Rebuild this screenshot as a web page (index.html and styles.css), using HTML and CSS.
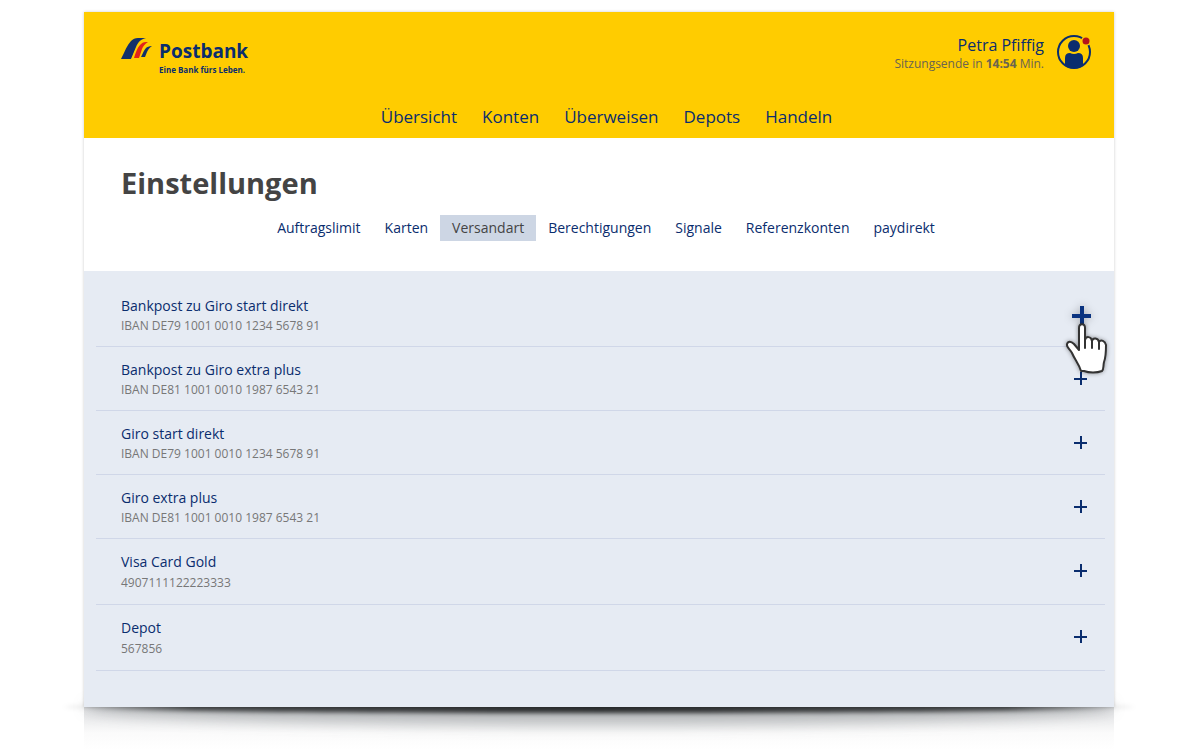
FILE: index.html
```html
<!DOCTYPE html>
<html lang="de">
<head>
<meta charset="utf-8">
<meta name="viewport" content="width=device-width, initial-scale=1">
<title>Postbank – Einstellungen</title>
<link rel="stylesheet" href="styles.css">
</head>
<body>
<div class="stage">
<div class="card">
  <header class="header">
    <div class="header-top">
      <a class="brand" href="#">
        <svg class="brand-mark" viewBox="0 0 31 22" aria-hidden="true">
          <path fill="#12306b" d="M0 21C4 13 6 7 10 3c2-2 4-3 7-3h8c-5 1-8 4-10 9l-5 12z"/>
          <path fill="#fc0" d="M10 22c3-6 4-11 7-15 2-3 4-4 7-4h3l-6 18z"/>
          <path fill="#e2231a" d="M13 20c2-6 3-10 6-13 2-2 3-3 6-3h2c-3 2-5 4-6 7l-3 9z"/>
          <path fill="#12306b" d="M20 19c2-4 3-7 5-9 1-1 3-2 6-2-3 2-4 4-5 6l-2 5z"/>
        </svg>
        <span class="brand-text">
          <span class="brand-name">Postbank</span>
          <span class="brand-claim">Eine Bank fürs Leben.</span>
        </span>
      </a>
      <div class="user">
        <div class="user-text">
          <div class="user-name">Petra Pfiffig</div>
          <div class="user-session">Sitzungsende in <b>14:54</b> Min.</div>
        </div>
        <button class="user-button" type="button" aria-label="Profil">
          <svg viewBox="0 0 36 36" aria-hidden="true">
            <circle cx="18" cy="18" r="16" fill="none" stroke="#0a2d6e" stroke-width="2"/>
            <circle cx="18" cy="12" r="6" fill="#0a2d6e"/>
            <path fill="#0a2d6e" d="M9 32V24q0-5 5-5 4 2 8 0 5 0 5 5v8q-9 5-18 0z"/>
            <circle cx="30" cy="7" r="5" fill="#fc0"/>
            <circle cx="30" cy="7" r="3.500" fill="#b5121b"/>
          </svg>
        </button>
      </div>
    </div>
    <nav class="main-nav" aria-label="Hauptnavigation">
      <a href="#">Übersicht</a><a href="#">Konten</a><a href="#">Überweisen</a><a href="#">Depots</a><a href="#">Handeln</a>
    </nav>
  </header>
  <div class="heading">
    <h1>Einstellungen</h1>
    <nav class="sub-nav" aria-label="Einstellungen">
      <a href="#">Auftragslimit</a><a href="#">Karten</a><a class="active" href="#" aria-current="page">Versandart</a><a href="#">Berechtigungen</a><a href="#">Signale</a><a href="#">Referenzkonten</a><a href="#">paydirekt</a>
    </nav>
  </div>
  <main class="content">
    <ul class="accounts">
      <li class="account hovered">
        <div><div class="account-name">Bankpost zu Giro start direkt</div><div class="account-number">IBAN DE79 1001 0010 1234 5678 91</div></div>
        <button class="expand" type="button" aria-label="Öffnen"></button>
        <svg class="pointer" viewBox="0 0 44 52" aria-hidden="true">
          <path d="M17 49C15 42 11 38 8 31 6 27 2 25 3 22c1-3 4-3 7 0l5 6V6c0-5 6-5 6 0v12c1-4 6-4 7 1 1-4 6-3 7 1 2-3 6-1 7 3 0 8 0 12-2 17-1 4 0 7-2 9-5 2-13 2-18 0z" fill="#fff" stroke="#333" stroke-width="2" stroke-linejoin="round"/>
          <path d="M21 18v8M28 19v7M35 20v7" fill="none" stroke="#333" stroke-width="2" stroke-linecap="round"/>
        </svg>
      </li>
      <li class="account">
        <div><div class="account-name">Bankpost zu Giro extra plus</div><div class="account-number">IBAN DE81 1001 0010 1987 6543 21</div></div>
        <button class="expand" type="button" aria-label="Öffnen"></button>
      </li>
      <li class="account">
        <div><div class="account-name">Giro start direkt</div><div class="account-number">IBAN DE79 1001 0010 1234 5678 91</div></div>
        <button class="expand" type="button" aria-label="Öffnen"></button>
      </li>
      <li class="account">
        <div><div class="account-name">Giro extra plus</div><div class="account-number">IBAN DE81 1001 0010 1987 6543 21</div></div>
        <button class="expand" type="button" aria-label="Öffnen"></button>
      </li>
      <li class="account loose">
        <div><div class="account-name">Visa Card Gold</div><div class="account-number">4907111122223333</div></div>
        <button class="expand" type="button" aria-label="Öffnen"></button>
      </li>
      <li class="account loose">
        <div><div class="account-name">Depot</div><div class="account-number">567856</div></div>
        <button class="expand" type="button" aria-label="Öffnen"></button>
      </li>
    </ul>
  </main>
</div>
<div class="floor-shadow"></div>
</div>
</body>
</html>
```
FILE: styles.css
```css
* { box-sizing: border-box; }
body {
  margin: 0;
  background: #fff;
  color: #0a2d6e;
  font-family: "Open Sans", "Noto Sans", sans-serif;
  font-weight: 500;
}
a { color: inherit; text-decoration: none; }
button { padding: 0; border: 0; background: none; cursor: pointer; }
.stage { padding: 12px 86px 0 84px; overflow: hidden; }
.card { position: relative; z-index: 1; box-shadow: 0 0 3px rgba(0, 0, 0, 0.2); }

.header { background: #fc0; }
.header-top {
  display: flex;
  justify-content: space-between;
  align-items: flex-start;
  padding: 20px 22px 0 37px;
  height: 88px;
}
.brand { display: flex; gap: 7px; padding-top: 6px; }
.brand-mark { width: 31px; height: 22px; }
.brand-text { display: flex; flex-direction: column; }
.brand-name { font-size: 19px; line-height: 26px; font-weight: 700; }
.brand-claim { font-size: 8px; line-height: 12px; font-weight: 700; }
.user { display: flex; gap: 12px; text-align: right; }
.user-name { font-size: 16px; line-height: 26px; }
.user-session { font-size: 12px; line-height: 12px; color: #6a6450; }
.user-button { width: 36px; height: 36px; margin-top: 2px; }
.user-button svg { display: block; }
.main-nav {
  display: flex;
  justify-content: center;
  gap: 25px;
  height: 38px;
  padding: 4px 0 0 15px;
  font-size: 17px;
  line-height: 26px;
}

.heading { height: 133px; background: #fff; }
h1 {
  margin: 0;
  padding: 25px 37px 12px;
  font-size: 29px;
  line-height: 40px;
  color: #444;
}
.sub-nav {
  display: flex;
  justify-content: center;
  padding-left: 14px;
  font-size: 14px;
  line-height: 26px;
}
.sub-nav a { padding: 0 12px; }
.sub-nav .active { background: #cdd6e4; color: #444; }

.content { background: #e6ebf3; padding: 12px 9px 36px 12px; }
.accounts { margin: 0; padding: 0; list-style: none; }
.account {
  position: relative;
  display: flex;
  justify-content: space-between;
  align-items: flex-start;
  padding: 13px 18px 10px 25px;
  border-bottom: 1px solid #d0d7e8;
}
.account-name { font-size: 14px; line-height: 20px; }
.account-number { font-size: 12px; line-height: 20px; color: #777; }
.loose .account-number { line-height: 22px; }
.expand {
  width: 13px;
  height: 13px;
  margin-top: 12px;
  background:
    linear-gradient(#0a2d6e, #0a2d6e) center / 13px 2px no-repeat,
    linear-gradient(#0a2d6e, #0a2d6e) center / 2px 13px no-repeat;
}
.hovered .expand {
  width: 19px;
  height: 19px;
  margin: 10px -4px 0 0;
  background:
    linear-gradient(#0a3380, #0a3380) center / 19px 4px no-repeat,
    linear-gradient(#0a3380, #0a3380) center / 4px 19px no-repeat;
  filter: drop-shadow(0 0 4px rgba(0, 0, 0, 0.3));
}
.pointer {
  position: absolute;
  z-index: 2;
  right: -3px;
  top: 39px;
  width: 44px;
  height: 52px;
  filter: drop-shadow(0 0 2px rgba(0, 0, 0, 0.4));
}

.floor-shadow {
  position: relative;
  height: 43px;
  background: linear-gradient(rgba(120, 125, 135, 0.24), rgba(200, 200, 200, 0.08) 60%, transparent);
}
.floor-shadow::before {
  content: "";
  position: absolute;
  left: -20px;
  right: -20px;
  top: -6px;
  height: 12px;
  border-radius: 50%;
  background: linear-gradient(90deg, rgba(0, 0, 0, 0.08) 2%, rgba(0, 0, 0, 0.7) 12%, rgba(0, 0, 0, 0.85) 50%, rgba(0, 0, 0, 0.7) 88%, rgba(0, 0, 0, 0.08) 98%);
  filter: blur(2px);
}
.floor-shadow::after {
  content: "";
  position: absolute;
  left: 0;
  right: 0;
  top: -18px;
  height: 36px;
  border-radius: 50%;
  background: rgba(70, 75, 80, 0.3);
  filter: blur(7px);
}
```
